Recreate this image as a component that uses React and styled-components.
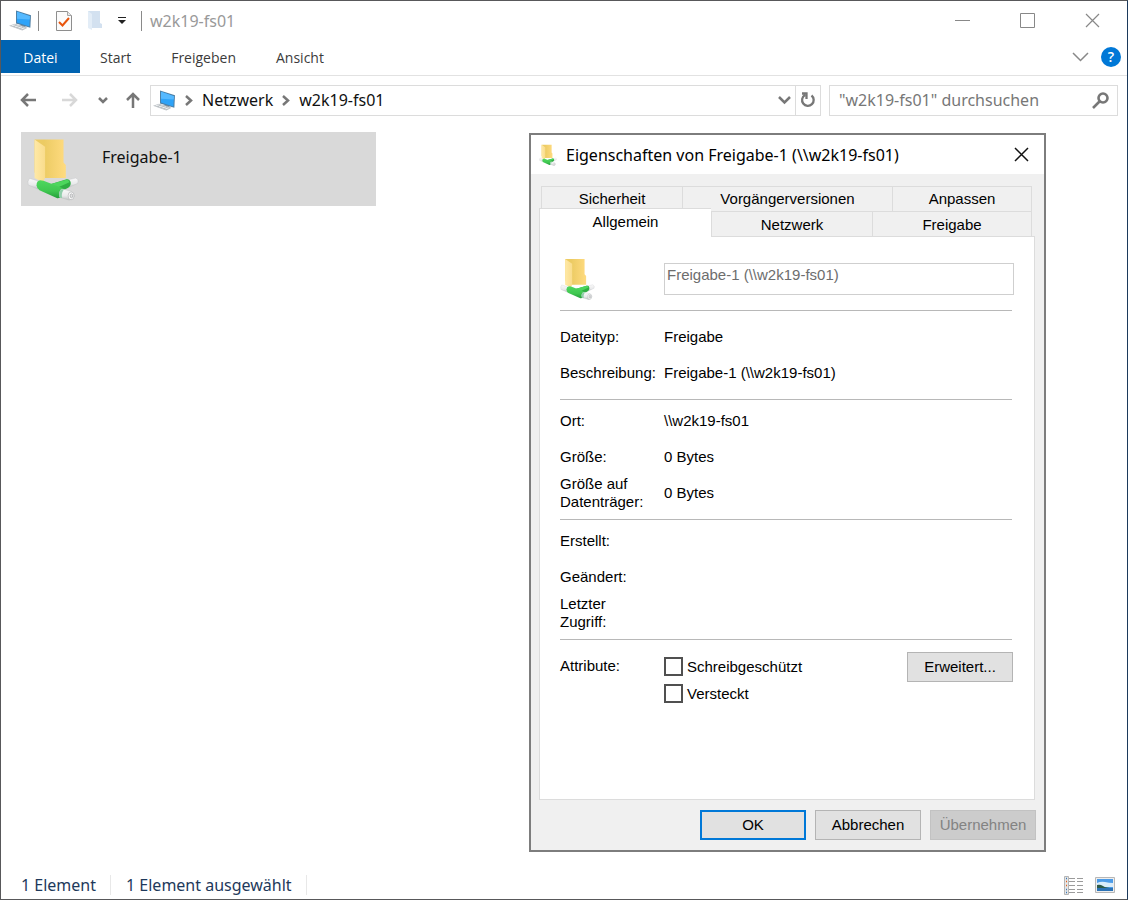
import React from "react";
import styled, { createGlobalStyle, css } from "styled-components";

const ui = `"Noto Sans", "Open Sans", sans-serif`;
const ribbonFont = `"Open Sans", "Noto Sans", sans-serif`;
const classic = `"Liberation Sans", Arial, sans-serif`;

const GlobalStyle = createGlobalStyle`
  *, *::before, *::after { box-sizing: border-box; }
  body { margin: 0; background: #fff; }
  button, input { font: inherit; color: inherit; margin: 0; padding: 0; }
  button { background: none; border: 0; }
  svg { display: block; flex: none; }
`;

const Explorer = styled.div`
  position: relative;
  display: flex;
  flex-direction: column;
  min-height: 100vh;
  border: 1px solid #58585a;
  border-right-color: #1c3a5c;
  background: #fff;
  font-family: ${ui};
  font-size: 16px;
  line-height: 20px;
  color: #111;
`;

const TitleBar = styled.header`
  display: flex;
  align-items: center;
  height: 39px;
  padding: 0 27px 0 8px;
`;

const QuickAccess = styled.div`
  display: flex;
  align-items: center;
`;

const QuickButton = styled.button`
  display: flex;
  margin-left: ${(p) => p.$gap}px;
`;

const Rule = styled.span`
  width: 1px;
  height: 20px;
  margin-left: ${(p) => p.$gap}px;
  background: #8a8a8a;
`;

const WindowTitle = styled.h1`
  flex: 1;
  margin: 0 0 0 8px;
  font-size: 16px;
  font-weight: 400;
  line-height: 20px;
  color: #999;
`;

const WindowControls = styled.div`
  display: flex;
  gap: 50px;
`;

const IconButton = styled.button`
  display: flex;
  align-items: center;
  justify-content: center;
`;

const Ribbon = styled.nav`
  display: flex;
  align-items: center;
  height: 36px;
  padding: 0 6px 2px 0;
  border-bottom: 1px solid #e2e2e2;
  font-family: ${ribbonFont};
  font-size: 14px;
  color: #3b3b3b;
`;

const RibbonTab = styled.button`
  height: 33px;
  padding: 3px 20px 0;
  ${(p) =>
    p.$file &&
    css`
      width: 79px;
      padding: 3px 0 0;
      background: #0063b1;
      color: #fff;
    `}
`;

const RibbonEnd = styled.div`
  display: flex;
  align-items: center;
  gap: 12px;
  margin-left: auto;
`;

const HelpButton = styled.button`
  width: 20px;
  height: 20px;
  border-radius: 50%;
  background: #0078d7;
  color: #fff;
  font-size: 14px;
  font-weight: 600;
  line-height: 20px;
`;

const NavBar = styled.div`
  display: flex;
  align-items: center;
  height: 48px;
  padding: 0 9px 0 19px;
`;

const History = styled.div`
  display: flex;
  align-items: center;
  width: 130px;
`;

const AddressBar = styled.div`
  display: flex;
  flex: 1;
  align-items: center;
  height: 31px;
  margin-right: 8px;
  border: 1px solid #dcdcdc;
`;

const Crumbs = styled.div`
  display: flex;
  flex: 1;
  align-items: center;
  gap: 9px;
  padding-left: 2px;
`;

const RefreshButton = styled(IconButton)`
  width: 25px;
  height: 29px;
  margin-left: 4px;
  border-left: 1px solid #dcdcdc;
`;

const SearchBox = styled.label`
  display: flex;
  align-items: center;
  width: 289px;
  height: 31px;
  padding: 0 8px 0 9px;
  border: 1px solid #dcdcdc;
`;

const SearchInput = styled.input`
  flex: 1;
  min-width: 0;
  border: 0;
  outline: 0;
  background: none;
  &::placeholder {
    color: #777;
    opacity: 1;
  }
`;

const Files = styled.main`
  flex: 1;
  padding: 8px 20px;
`;

const FileTile = styled.div`
  display: flex;
  width: 355px;
  height: 74px;
  padding: 6px;
  background: #d9d9d9;
`;

const FileName = styled.span`
  padding: 9px 0 0 23px;
`;

const StatusBar = styled.footer`
  display: flex;
  align-items: center;
  height: 28px;
  padding: 0 12px 0 20px;
  color: #1e395b;
`;

const StatusItem = styled.span`
  padding-right: 14px;
  margin-right: 15px;
  border-right: 1px solid #e8e8e8;
`;

const ViewButtons = styled.div`
  display: flex;
  align-items: center;
  gap: 11px;
  margin-left: auto;
`;

const Dialog = styled.section`
  position: absolute;
  top: 132px;
  right: 81px;
  width: 517px;
  border: 2px solid #7d7d7d;
  background: #f0f0f0;
  font-family: ${classic};
  font-size: 15px;
  line-height: 18px;
  color: #000;
`;

const DialogTitle = styled.header`
  display: flex;
  align-items: center;
  height: 39px;
  padding: 0 15px 0 8px;
  background: #fff;
  font-family: ${ui};
`;

const DialogName = styled.h2`
  flex: 1;
  margin: 0 0 0 9px;
  font-size: 16px;
  font-weight: 400;
  line-height: 22px;
`;

const DialogBody = styled.div`
  padding: 12px 9px 10px 8px;
`;

const TabRow = styled.div`
  display: grid;
  grid-template-columns: ${(p) => p.$columns};
  height: 25px;
  padding: 0 3px 0 2px;
`;

const Tab = styled.button`
  border: 1px solid #dcdcdc;
  border-width: 1px 0 0 1px;
  &:last-child {
    border-right-width: 1px;
  }
  ${(p) =>
    p.$active &&
    css`
      position: relative;
      height: 29px;
      margin: -3px 0 0 -2px;
      padding-bottom: 2px;
      background: #fff;
    `}
`;

const Panel = styled.div`
  height: 564px;
  padding: 0 22px 0 20px;
  border: 1px solid #dcdcdc;
  background: #fff;
`;

const Identity = styled.div`
  display: grid;
  grid-template-columns: 104px 350px;
  align-items: center;
  height: 74px;
  padding-top: 10px;
  border-bottom: 1px solid #b8b8b8;
`;

const NameField = styled.input`
  height: 32px;
  padding: 0 2px 8px;
  border: 1px solid #cfcfcf;
  background: #fff;
  color: #6d6d6d;
`;

const Facts = styled.dl`
  margin: 0;
  padding: ${(p) => (p.$loose ? "8px 0" : "3px 0 8px")};
  border-bottom: 1px solid #b8b8b8;
`;

const Fact = styled.div`
  display: grid;
  grid-template-columns: 104px 1fr;
  align-items: center;
  height: 36px;
`;

const Term = styled.dt`
  max-width: ${(p) => (p.$wrap ? "90px" : "none")};
`;

const Value = styled.dd`
  margin: 0;
`;

const Attributes = styled.div`
  display: grid;
  grid-template-columns: 104px 1fr auto;
  align-items: start;
  padding-top: 12px;
  margin-right: -1px;
`;

const AttributeLabel = styled.span`
  padding-top: 5px;
`;

const CheckList = styled.div`
  display: grid;
  gap: 8px;
  padding-top: 5px;
`;

const Check = styled.label`
  display: flex;
  align-items: center;
  gap: 4px;
`;

const CheckBox = styled.input`
  appearance: none;
  width: 19px;
  height: 19px;
  margin: 0;
  border: 2px solid #505050;
  background: #fff;
`;

const PushButton = styled.button`
  width: 106px;
  height: 30px;
  border: 1px solid #b4b4b4;
  background: #e1e1e1;
  ${(p) =>
    p.$primary &&
    css`
      border: 2px solid #0078d7;
    `}
  &:disabled {
    border-color: #c2c2c2;
    background: #ccc;
    color: #838383;
  }
`;

const DialogButtons = styled.footer`
  display: flex;
  justify-content: flex-end;
  gap: 9px;
  padding-top: 10px;
  margin-right: -1px;
`;

const SharedFolderIcon = ({ width, height }) => (
  <svg width={width} height={height} viewBox="34 24 158 190" aria-hidden="true">
    <defs>
      <linearGradient id="folderBack" x1="0" x2="1">
        <stop offset="0.3" stopColor="#eccb63" />
        <stop offset="1" stopColor="#ffdb80" />
      </linearGradient>
      <linearGradient id="folderFront" x1="0" x2="1">
        <stop offset="0" stopColor="#ffe9a6" />
        <stop offset="1" stopColor="#f9dc8c" />
      </linearGradient>
      <linearGradient id="pipe" x1="0" y1="0" x2="0" y2="1">
        <stop offset="0" stopColor="#fafafa" />
        <stop offset="0.6" stopColor="#e9eaeb" />
        <stop offset="1" stopColor="#bfc1c3" />
      </linearGradient>
      <linearGradient id="greenPipe" x1="0" y1="0" x2="0" y2="1">
        <stop offset="0" stopColor="#4fd75f" />
        <stop offset="0.6" stopColor="#3fc750" />
        <stop offset="1" stopColor="#259f3b" />
      </linearGradient>
    </defs>
    <path d="M57 28H145V98L152 105V145H80L57 128Z" fill="url(#folderBack)" />
    <path d="M57 28L89 50V144L83 158L57 145Z" fill="url(#folderFront)" />
    <path d="M42 146Q34 154 38 166L68 179V154Z" fill="url(#pipe)" stroke="#b9bbbd" />
    <path d="M156 151L182 145Q192 148 188 161L160 174Z" fill="url(#pipe)" stroke="#b9bbbd" />
    <path d="M100 165L154 149Q165 148 167 160Q167 170 158 175L128 190Z" fill="#2fae43" />
    <path d="M104 164L154 150Q162 150 163 158L124 175Z" fill="#4dd65d" />
    <path d="M74 152Q63 154 63 167Q64 178 72 182L126 206Q142 207 146 190Q148 178 138 174L84 153Z" fill="url(#greenPipe)" />
    <path d="M138 179Q129 188 133 203L162 212Q174 211 178 200Q179 190 170 186L145 179Z" fill="url(#pipe)" stroke="#a9b5ae" />
    <path d="M138 179Q129 188 133 203L141 206Q137 193 146 180Z" fill="#8fcfaa" />
    <ellipse cx="168" cy="199" rx="9" ry="12" fill="#fafafa" stroke="#b2b4b6" strokeWidth="2" />
    <ellipse cx="169" cy="199" rx="4" ry="6" fill="#dfe0e1" stroke="#a0a2a4" strokeWidth="2" />
  </svg>
);

const NetworkPcIcon = () => (
  <svg width="23" height="21" viewBox="24 30 69 62" aria-hidden="true">
    <path d="M60 72L74 77L72 84L56 79Z" fill="#8c979f" />
    <path d="M45 31L90 45L88 83L45 70Z" fill="#4d7fa5" />
    <path d="M48 35L87 48L85 79L48 67Z" fill="#2ea3f8" />
    <path d="M48 35L87 48L86 58L48 56Z" fill="#55b9ff" />
    <path d="M24 77L42 71L80 83L64 91Z" fill="#bcc1c5" />
    <path d="M32 77L43 74M42 80L53 77M52 83L63 80M61 86L71 83" stroke="#eef0f1" strokeWidth="3" />
  </svg>
);

const PropertiesIcon = () => (
  <svg width="16" height="20" viewBox="0 0 16 20" aria-hidden="true">
    <path d="M.5.5H11.5L15.500 4.500V19.500H.5Z" fill="#fbfbfb" stroke="#8e8e8e" />
    <path d="M11.500.5V4.500H15.500" fill="#e8e8e8" stroke="#a5a5a5" />
    <path d="M3 11L6.500 14.500L13 7" fill="none" stroke="#e8540c" strokeWidth="2" />
  </svg>
);

const NewFolderIcon = () => (
  <svg width="14" height="21" viewBox="0 0 14 21" aria-hidden="true">
    <path d="M0 1H12V13L14 14V18H3L0 17Z" fill="#d3e1f0" />
    <path d="M0 1L4 4V20L0 18Z" fill="#e3edf7" />
  </svg>
);

const MenuCaretIcon = () => (
  <svg width="8" height="8" viewBox="0 0 8 8" aria-hidden="true">
    <path d="M0 0H8V1H0ZM0 3H8L4 7Z" fill="#222" />
  </svg>
);

const Stroke = ({ w, h, d, color = "#777", weight = 2 }) => (
  <svg width={w} height={h} viewBox={`0 0 ${w} ${h}`} aria-hidden="true">
    <path d={d} fill="none" stroke={color} strokeWidth={weight} />
  </svg>
);

const DetailsIcon = () => (
  <svg width="20" height="19" viewBox="0 0 20 19" aria-hidden="true">
    <path d="M.5.5H4.500V18.500H.5Z" fill="#e6e6e6" stroke="#b5b5b5" />
    <path d="M5 2.500H11M13 2.500H19M5 5.500H11M13 5.500H19M5 9.500H11M13 9.500H19M5 13.500H11M13 13.500H19M5 16.500H11M13 16.500H19" stroke="#9b9b9b" />
    <path d="M2 2.500H3M2 13.500H3M2 16.500H3" stroke="#3a78b8" strokeWidth="1.500" />
    <path d="M2 5.500H3M2 9.500H3" stroke="#e0601e" strokeWidth="1.500" />
  </svg>
);

const ThumbnailsIcon = () => (
  <svg width="20" height="16" viewBox="0 0 20 16" aria-hidden="true">
    <path d="M.5.5H19.500V15.500H.5Z" fill="#eee" stroke="#b7b7b7" />
    <path d="M2 2H18V14H2Z" fill="#4b9be8" />
    <path d="M2 6Q6 4 10 5T18 6V10H2Z" fill="#d8ecfb" />
    <path d="M2 8Q5 7 8 9T18 11H2Z" fill="#2c5a48" />
    <path d="M2 11H18V14H2Z" fill="#2b72b5" />
  </svg>
);

const typeFacts = [
  ["Dateityp:", "Freigabe"],
  ["Beschreibung:", "Freigabe-1 (\\\\w2k19-fs01)"],
];
const sizeFacts = [
  ["Ort:", "\\\\w2k19-fs01"],
  ["Größe:", "0 Bytes"],
  ["Größe auf Datenträger:", "0 Bytes"],
];
const dateFacts = [
  ["Erstellt:", ""],
  ["Geändert:", ""],
  ["Letzter Zugriff:", ""],
];

const FactList = ({ rows, loose }) => (
  <Facts $loose={loose}>
    {rows.map(([term, value]) => (
      <Fact key={term}>
        <Term $wrap={term.includes(" ")}>{term}</Term>
        <Value>{value}</Value>
      </Fact>
    ))}
  </Facts>
);

const PropertiesDialog = () => (
  <Dialog role="dialog" aria-labelledby="dialog-name">
    <DialogTitle>
      <SharedFolderIcon width={18} height={22} />
      <DialogName id="dialog-name">Eigenschaften von Freigabe-1 (\\w2k19-fs01)</DialogName>
      <IconButton aria-label="Schließen">
        <Stroke w={15} h={15} d="M1 1L14 14M14 1L1 14" color="#111" weight={1.5} />
      </IconButton>
    </DialogTitle>
    <DialogBody>
      <div role="tablist">
        <TabRow $columns="141fr 210fr 140fr">
          <Tab role="tab">Sicherheit</Tab>
          <Tab role="tab">Vorgängerversionen</Tab>
          <Tab role="tab">Anpassen</Tab>
        </TabRow>
        <TabRow $columns="170fr 161fr 160fr">
          <Tab role="tab" aria-selected="true" $active>Allgemein</Tab>
          <Tab role="tab">Netzwerk</Tab>
          <Tab role="tab">Freigabe</Tab>
        </TabRow>
      </div>
      <Panel role="tabpanel">
        <Identity>
          <SharedFolderIcon width={35} height={42} />
          <NameField aria-label="Name" readOnly value={"Freigabe-1 (\\\\w2k19-fs01)"} />
        </Identity>
        <FactList rows={typeFacts} loose />
        <FactList rows={sizeFacts} />
        <FactList rows={dateFacts} />
        <Attributes>
          <AttributeLabel>Attribute:</AttributeLabel>
          <CheckList>
            <Check>
              <CheckBox type="checkbox" />
              Schreibgeschützt
            </Check>
            <Check>
              <CheckBox type="checkbox" />
              Versteckt
            </Check>
          </CheckList>
          <PushButton>Erweitert...</PushButton>
        </Attributes>
      </Panel>
      <DialogButtons>
        <PushButton $primary>OK</PushButton>
        <PushButton>Abbrechen</PushButton>
        <PushButton disabled>Übernehmen</PushButton>
      </DialogButtons>
    </DialogBody>
  </Dialog>
);

export default function App() {
  return (
    <>
      <GlobalStyle />
      <Explorer>
        <TitleBar>
          <QuickAccess>
            <NetworkPcIcon />
            <Rule $gap={6} />
            <QuickButton $gap={17} aria-label="Eigenschaften"><PropertiesIcon /></QuickButton>
            <QuickButton $gap={16} aria-label="Neuer Ordner"><NewFolderIcon /></QuickButton>
            <QuickButton $gap={16} aria-label="Symbolleiste anpassen"><MenuCaretIcon /></QuickButton>
            <Rule $gap={15} />
          </QuickAccess>
          <WindowTitle>w2k19-fs01</WindowTitle>
          <WindowControls>
            <IconButton aria-label="Minimieren"><Stroke w={15} h={15} d="M0 7.500H15" color="#888" weight={1} /></IconButton>
            <IconButton aria-label="Maximieren"><Stroke w={15} h={15} d="M.5.5H14.500V14.500H.5Z" color="#888" weight={1} /></IconButton>
            <IconButton aria-label="Schließen"><Stroke w={15} h={15} d="M1 1L14 14M14 1L1 14" color="#888" weight={1.2} /></IconButton>
          </WindowControls>
        </TitleBar>
        <Ribbon>
          <RibbonTab $file>Datei</RibbonTab>
          <RibbonTab>Start</RibbonTab>
          <RibbonTab>Freigeben</RibbonTab>
          <RibbonTab>Ansicht</RibbonTab>
          <RibbonEnd>
            <IconButton aria-label="Menüband erweitern"><Stroke w={17} h={10} d="M1 1L8.500 8.500L16 1" color="#888" weight={1.5} /></IconButton>
            <HelpButton aria-label="Hilfe">?</HelpButton>
          </RibbonEnd>
        </Ribbon>
        <NavBar>
          <History>
            <IconButton aria-label="Zurück"><Stroke w={17} h={14} d="M16 7H2M8 1L2 7L8 13" weight={2.5} /></IconButton>
            <QuickButton $gap={24} aria-label="Vorwärts"><Stroke w={17} h={14} d="M1 7H15M9 1L15 7L9 13" color="#d8d8d8" weight={2.5} /></QuickButton>
            <QuickButton $gap={20} aria-label="Verlauf"><Stroke w={10} h={7} d="M1 1L5 5L9 1" weight={2.5} /></QuickButton>
            <QuickButton $gap={18} aria-label="Nach oben"><Stroke w={14} h={16} d="M7 16V2M1 8L7 2L13 8" weight={2.5} /></QuickButton>
          </History>
          <AddressBar>
            <Crumbs>
              <NetworkPcIcon />
              <Stroke w={8} h={11} d="M1 1L6 5.500L1 10" weight={2.5} />
              <button>Netzwerk</button>
              <Stroke w={8} h={11} d="M1 1L6 5.500L1 10" weight={2.5} />
              <button>w2k19-fs01</button>
            </Crumbs>
            <IconButton aria-label="Vorherige Orte"><Stroke w={13} h={9} d="M1 1L6.500 6.500L12 1" weight={2.5} /></IconButton>
            <RefreshButton aria-label="Aktualisieren">
              <Stroke w={16} h={16} d="M11.500 3.500A5.800 5.800 0 1 1 5 3M2 1.500H6.500V7" weight={2.3} />
            </RefreshButton>
          </AddressBar>
          <SearchBox>
            <SearchInput aria-label="Suchen" placeholder={'"w2k19-fs01" durchsuchen'} />
            <Stroke w={17} h={17} d="M11 1.500A4.500 4.500 0 1 1 11 10.500A4.500 4.500 0 1 1 11 1.500M8 9L1 16" weight={2.6} />
          </SearchBox>
        </NavBar>
        <Files>
          <FileTile>
            <SharedFolderIcon width={52} height={63} />
            <FileName>Freigabe-1</FileName>
          </FileTile>
        </Files>
        <StatusBar>
          <StatusItem>1 Element</StatusItem>
          <StatusItem>1 Element ausgewählt</StatusItem>
          <ViewButtons>
            <IconButton aria-label="Details"><DetailsIcon /></IconButton>
            <IconButton aria-label="Große Symbole"><ThumbnailsIcon /></IconButton>
          </ViewButtons>
        </StatusBar>
        <PropertiesDialog />
      </Explorer>
    </>
  );
}
